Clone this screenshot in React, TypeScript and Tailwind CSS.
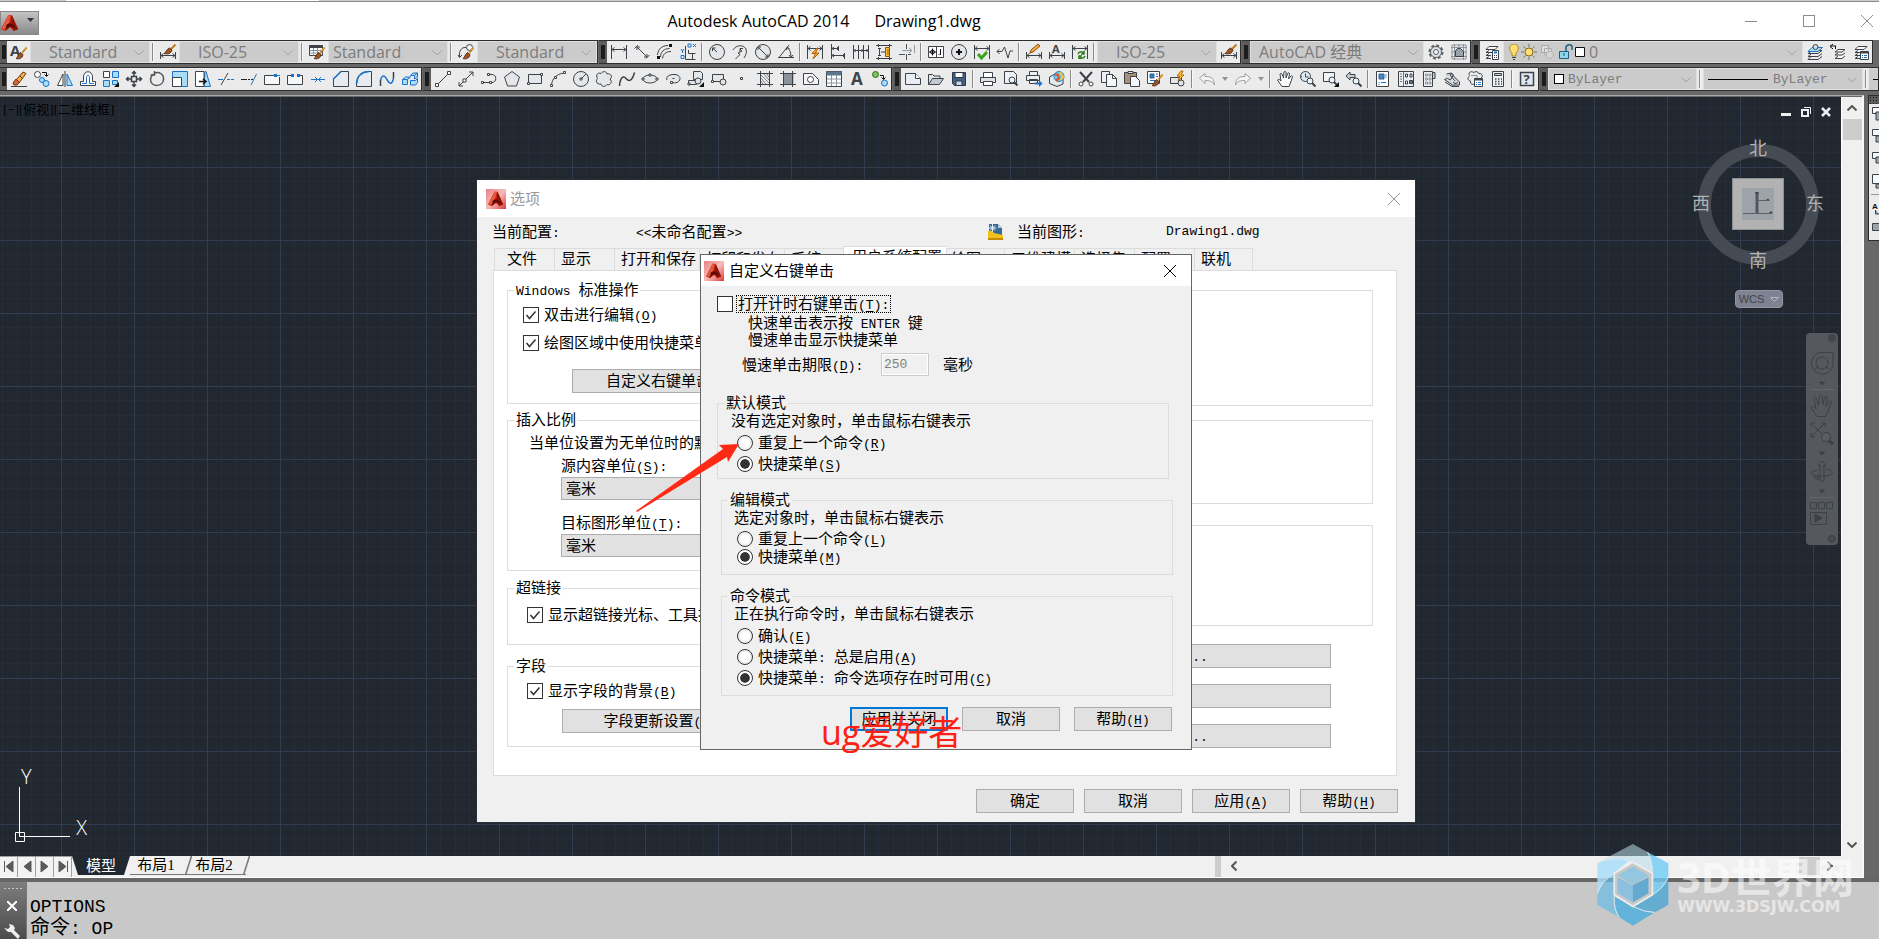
import { useId, type ReactNode } from "react";
import { clsx } from "clsx";

const INK = "#3d4248";
const BLUE = "#1a73c8";
const SKY = "#a9dcf5";
const PAPER = "#f7f9fc";

type PathProps = { d: string; c?: string; f?: string; w?: number };

function P({ d, c = INK, f = "none", w = 1 }: PathProps) {
  return <path d={d} stroke={c} fill={f} strokeWidth={w} />;
}

function Brush() {
  return (
    <>
      <P d="M15.500 3.500L11.500 8.500" c="#c77a1c" w={2} />
      <P d="M15.500 3L13.500 5.500" c="#f2b544" />
      <P d="M5 14.500C7 14 6.500 10.500 9.500 8.500L12 10.500C11.500 14.500 8 15.500 5 14.500Z" c="#5f3212" f="#9a5626" />
    </>
  );
}

function Lens({ x = 10, y = 10 }: { x?: number; y?: number }) {
  return (
    <>
      <circle cx={x} cy={y} r="3" fill="#e8f3fa" stroke={INK} />
      <path d={`M${x + 2} ${y + 2}l3.500 3.500`} stroke={INK} strokeWidth="2" />
    </>
  );
}

const dimBar = <P d="M.5 8v7M15.500 8v7M1 11.500h14M3.500 9.500l-2.500 2 2.500 2M12.500 9.500l2.500 2-2.500 2" />;
const dimTop = <P d="M.5 1v14M15.500 1v14M1 4.500h14M3.500 2.500L1 4.500l2.500 2M12.500 2.500L15 4.500l-2.500 2" />;
const sheets = <P d="M5 2.500h9l-3 3H2zM5 6.500L2 8.500h9l1-1M5 9.500l-3 2h5M5 12.500l-3 2h5" f={PAPER} />;
const bigCircle = <circle cx="8" cy="8" r="7.500" fill="#e4e7ea" stroke={INK} />;
const bolt = <P d="M11 0L7 5h3L8 10l6-6h-3l2-4z" c="#b56a00" f="#ffc532" />;

const icons: Record<string, ReactNode> = {
  textStyle: (
    <>
      <text x="-1" y="12" fontSize="15" fontWeight="700" fontFamily="Open Sans, sans-serif" fill={INK}>A</text>
      <Brush />
    </>
  ),
  dimStyle: (
    <>
      {dimBar}
      <P d="M15.500 .5L11 5" c="#c77a1c" w={2} />
      <P d="M4 9.500C6 9 6 5.500 9.500 4L12 6C11 9.500 8 10.500 4 9.500Z" c="#5f3212" f="#9a5626" />
    </>
  ),
  tableStyle: (
    <>
      <P d="M.5 1.500h13v10H.5z" f="#fff" />
      <P d="M.5 2.500h13" w={3} />
      <P d="M4.500 4v7.500M8.500 4v7.500M.5 6.500h13M.5 9h13" c="#8d949b" />
      <Brush />
    </>
  ),
  leaderStyle: (
    <>
      <P d="M1.500 13V8.500C3 4 5 3.500 8 3.500M0 11l1.500 2.500L4 11" />
      <circle cx="11.500" cy="3.500" r="3" stroke={INK} fill={PAPER} />
      <Brush />
    </>
  ),
  dimLinear: <P d="M.5 1v14M15.500 1v14M1 5.500h14M3.500 3.500l-2.500 2 2.500 2M12.500 3.500l2.500 2-2.500 2" />,
  dimAligned: <P d="M4 1L.5 4.500M15.500 11L12 14.500M3 3l10 10M3 6V3h3M13 10v3h-3" />,
  dimArc: (
    <>
      <P d="M3.500 13C3.500 8 7 4.500 12.500 4.500M5.500 14.500C6 10 9 7.500 14 7.500M.5 11C1 5 5 1.500 11 1.500" />
      <P d="M0 12h3v3H0zM12 0h3v3h-3z" c="#111" f="#111" w={0} />
    </>
  ),
  dimOrdinate: (
    <>
      <P d="M5.500 2v13.500h10M8.500 6v3.500h7M12.500 10v5" />
      <P d="M1 5l1.500 2L4 5M2.500 7v2M1 11.500h3v3H1zM8 0h3v3H8zM13 0l3 3M16 0l-3 3" c={BLUE} />
    </>
  ),
  dimRadius: <>{bigCircle}<P d="M8 8L3.500 4M3.500 7V4h3" /></>,
  dimJogged: <P d="M1 6C4 1 11 0 14 5c1 3 0 6-2 9M3.500 15L8 10.500 6 9l4-2-2-2M8 8V4.500h3" />,
  dimDiameter: <>{bigCircle}<P d="M3 3l10 10M3 6V3h3M13 10v3h-3" /></>,
  dimAngular: <P d="M0 13.500h16M1 13.500L11 1M9 3.500c3 2 4 5 4 10M11.500 4.500L9 3.500 8.500 6M11 11l2 2.500 2-2.500" />,
  quickDim: <>{dimTop}<P d="M10 4L5 9.500h3.500L6 15l6-6H8.500L11 4z" c="#b35a00" f="#ffb42a" /></>,
  dimBaseline: <P d="M1.500 0v15M8.500 2v5M14.500 9v6M2 4.500h6M2 11.500h12M4 3L2 4.500 4 6M7 3l1.500 1.500L7 6M4 10l-2 1.500L4 13M13 10l1.500 1.500L13 13" />,
  dimContinue: <P d="M.5 1v14M5.500 1v14M10.500 1v14M15.500 1v14M1 6.500h14M2 5v3M9 5v3M14 5v3" />,
  dimSpace: <><P d="M0 1.500h16M0 14.500h16M2.500 0v3M13.500 0v3M2.500 13v3M13.500 13v3M3.500 4v8M2 4.500h3M2 11.500h3M5 8h4" /><P d="M9.500 3.500h4v9h-4zM11 6h2M11 8h2M11 10h2" c="#8a5a00" f="#ffc038" /></>,
  dimBreak: <><P d="M7.500 0v5M7.500 10v6M0 10.500h6M9 10.500h3" c="#4d5258" /><P d="M3 6.500h9M15.500 1v8M10 4l3 2.500L10 9" c="#9299a0" /></>,
  tolerance: <><P d="M.5 2.500h15v11H.5zM8.500 2.500v11" f="#fff" /><circle cx="4.500" cy="8" r="2" stroke="#111" fill="none" /><P d="M4.500 4.500v7M1 8h7M12.500 5v6M10.500 10.500h1" c="#111" /></>,
  centerMark: <>{bigCircle}<P d="M8 5v6M5 8h6" c="#111" w={2} /></>,
  inspect: <>{dimTop}<P d="M4 10l3.500 4L13 8" c="#35a51d" w={3} /></>,
  jogLine: <P d="M0 7.500h5M2.500 5L0 7.500 2.500 10M5 7.500L7.500 3l3.500 11 2-7h3" />,
  dimEdit: <>{dimBar}<P d="M4 9l1-3 7-6 2 2-7 6z" c="#8a4a12" f="#f6ac3c" /></>,
  dimTextEdit: <>{dimBar}<text x="3" y="9" fontSize="11" fontWeight="700" fontFamily="Open Sans, sans-serif" fill={INK}>A</text></>,
  dimUpdate: <>{dimTop}<P d="M6 10c1-3 5-3 6 0M12 7v3H9M13 12c-1 3-5 3-6 0M7 15v-3h3" c="#2f7d1e" w={1.500} /></>,
  gear: <><circle cx="8" cy="8" r="6.500" strokeDasharray="3 2" strokeWidth="2" stroke="#5a6067" fill="none" /><circle cx="8" cy="8" r="5.500" fill="#dfe3e7" stroke="#5a6067" /><circle cx="8" cy="8" r="2.500" fill="#f2f4f5" stroke="#5a6067" /></>,
  workspace: <><P d="M3.500 0v16M12.500 0v16M0 3.500h16M0 12.500h16M8 0v4M0 8h3M13 8h3M1 1h14v14H1z" c="#8d949b" /><P d="M4.500 7l2-2.500h3l3 3v5h-8z" f="#9aa2aa" /></>,
  layerProps: <>{sheets}<P d="M8.500 6.500h6v9h-6z" f="#fff" /><P d="M10 8.500h3" c={BLUE} w={2} /><P d="M10 11.500h1M12 11.500h1M10 13.500h1M12 13.500h1" /></>,
  layerCurrent: <><P d="M5 6.500h10l-4 3H1zM4 10L1 12.500h10l4-3M4 12.500L1 15.500h10l4-3" /><P d="M5 3.500h10.500L11 7.500H1z" c={BLUE} f={SKY} /><circle cx="8.500" cy="3" r="2.500" stroke={INK} fill="#d7dce0" /></>,
  layerPrev: <><P d="M8 5.500h7l-3 2.500H5zM8 9l-3 2h7l3-2M8 12l-3 2.500h7l3-2.500" f={PAPER} /><P d="M0 2h6M3 0L0 2.500 3 5M5.500 2v3" c="#111" /></>,
  layerStates: <>{sheets}<P d="M7.500 7.500h8v8h-8z" f="#fff" /><P d="M7.500 8.500h8" w={2} /><P d="M9 11.500h1M11 11.500h3M9 13.500h1M11 13.500h3" c={BLUE} /></>,

  erase: <><P d="M0 15.500h16" /><P d="M5 9l7-8 3 1.500L8 12z" c="#6b3a10" f="#f3b04b" /><P d="M9 5l3 3" c="#6b3a10" /><P d="M2 12l3-4 3.500 3.500L6 14H3z" c="#7d2a12" f="#d06a3a" /></>,
  copy: <><circle cx="3.500" cy="3.500" r="3" stroke={INK} fill="#fff" /><circle cx="8" cy="9" r="2.500" stroke={BLUE} fill={SKY} /><circle cx="12" cy="12.500" r="3" stroke={BLUE} fill={SKY} /><P d="M8 1.500h4.500V5M10.500 3.500l2 2 2-2" c="#111" /></>,
  mirror: <><P d="M.5 14.500L6 3v11.500z" f="#fff" /><P d="M8 0v16" /><P d="M15.500 14.500L10 3v11.500z" c={BLUE} f={SKY} /></>,
  offset: <><P d="M.5 14.500h15v-4h-3V6c0-7-9-7-9 0v4.500h-3z" f="#fff" /><P d="M2 12.500h4.500V6.500c0-3 3-3 3 0v6H14" c={BLUE} /></>,
  array: <><P d="M.5 .5h6v6h-6z" f="#fff" /><P d="M9.500 .5h6v6h-6zM.5 9.500h6v6h-6zM9.500 9.500h5v4h-5z" c={BLUE} f={SKY} /><P d="M16 11v5h-5z" c="#111" f="#111" w={0} /></>,
  move: <P d="M5.500 5.500h5v5h-5zM8 0v5M8 11v5M0 8h5M11 8h5M6 2.500L8 .5l2 2M6 13.500l2 2 2-2M2.500 6l-2 2 2 2M13.500 6l2 2-2 2" w={1.500} />,
  rotate: <P d="M5 2.500C10-.5 15 3.500 14.500 8.500 14 16 2.500 16.500 1.500 9 1.500 6.500 2.500 4.500 4.500 3M5.500 0v4h-4" c="#50565c" w={1.500} />,
  scale: <><P d="M.5 .5h15v15H.5z" c={BLUE} f={SKY} /><P d="M.5 6.500h9v9h-9z" f="#fff" /></>,
  stretch: <><P d="M10 .5h1l4.500 15H9z" c={BLUE} f={SKY} /><P d="M.5 .5h8.500v15H.5z" f="#fff" /><P d="M4 10.500h6M8 8l3 2.500L8 13" c="#111" w={1.500} /></>,
  trim: <><P d="M0 8.500h5" c={BLUE} /><P d="M9 8.500h3M13 8.500h3" c={BLUE} /><P d="M3 14L10 2" /></>,
  extend: <><P d="M0 8.500h6M7 8.500h2M10 8.500h2" c="#222" /><P d="M10 14L15.500 3" c={BLUE} /></>,
  breakPoint: <><P d="M10 4.500H.5v9h15V6" f="#f7f8fa" /><P d="M10 3h3v3h-3z" c={BLUE} f={BLUE} w={0} /><P d="M13 4.500h3" c={BLUE} /></>,
  break: <><P d="M4 4.500H.5v9h15v-9H12" f="#f7f8fa" /><P d="M4 3h3v3H4zM10 3h3v3h-3z" c={BLUE} f={BLUE} w={0} /></>,
  join: <P d="M1 8.500h14M5 6l2.500 2.500L5 11M11 6L8.500 8.500 11 11" c={BLUE} />,
  chamfer: <><P d="M.5 15.500V8L8 .5h7.500v15z" f="#e7ecf3" /><P d="M0 8.500L8.500 0" c={BLUE} w={1.500} /></>,
  fillet: <><P d="M.5 15.500V12C1 5 5 1 12 .5h3.500v15z" f="#e7ecf3" /><P d="M.5 13C1 5 5 1 13 .5" c={BLUE} w={1.500} /></>,
  blend: <><P d="M1.500 15V9M14.500 1v6" w={1.500} /><P d="M1.500 9C4 1 7 7 8.500 9.500S13 15 14.500 7" c={BLUE} w={1.500} /></>,
  explode: <P d="M.5 8.500h5v5h-5zM5.500 8.500l3-2.500h-5l-3 2.500M8.500 4.500h4l3-2.500h-4.500zM8.500 9.500h5l2-2v4l-2 2.500h-5zM12.500 4.500v3.500l3-2V2" c={BLUE} f={SKY} />,

  line: <><P d="M2 14L14 2" /><P d="M.5 12.500h3v3h-3zM12.500 .5h3v3h-3z" f="#fff" /></>,
  xline: <><P d="M1 15L15 1M11 1h4v4M1 11v4h4" /><P d="M5 8h3v3H5z" f="#fff" /></>,
  polyline: <><P d="M2 11.500h9c5 0 5-8 0-8H9" /><P d="M.5 10.500h2v2h-2zM8.500 10.500h2v2h-2zM6.500 2.500h2v2h-2z" f="#fff" /></>,
  polygon: <P d="M8 .5L15.500 6 12.500 15h-9L.5 6z" f="#e4e7ea" />,
  rectangle: <><P d="M1.500 3.500h13v9h-13z" f="#e4e7ea" /><P d="M.5 11.500h2v2h-2zM13.500 2.500h2v2h-2z" f="#fff" /></>,
  arc: <><P d="M1.500 14C2 8 6 3 14 2" /><P d="M.5 13.500h2v2h-2zM4.500 5.500h2v2h-2zM13.500 .5h2v2h-2z" f="#fff" /></>,
  circle: <>{bigCircle}<P d="M8 8l5-5M7 7h2v2H7z" /></>,
  cloud: <P d="M5 2.500c2-3 6-2 6 .5 4-1 6 3 3 5 3 3 0 7-3 5.500-2 3-6 2-6-.5-5 1-5.500-4-3.500-5.500C-.5 4 1.500 1 5 2.500z" f="#e4e7ea" />,
  spline: <P d="M.5 15C1 7 4 4 7 7.500s6 3 8.500-6" w={1.500} />,
  ellipse: <><ellipse cx="8" cy="8" rx="7" ry="4" stroke={INK} fill="#e4e7ea" /><P d="M0 7h2v2H0zM14 7h2v2h-2zM7 3h2v2H7z" f="#fff" /></>,
  ellipseArc: <><P d="M2 9C-1 3 15 1 15 7.500c0 4-5 5-8 4M7.500 7.500h2" f="#e4e7ea" /><P d="M5.500 10.500h2v2h-2z" f="#fff" /></>,
  insert: <><P d="M5.500 .5h7l2 2v6h-9zM.5 9.500h8v4h-8z" f="#e4e7ea" /><circle cx="10" cy="10" r="3" stroke={INK} fill="#dfe3e7" /><P d="M0 12h2v2H0z" f="#fff" /><P d="M16 11v5h-5z" c="#111" f="#111" w={0} /></>,
  makeBlock: <><P d="M1.500 3.500h11v7h-11z" f="#e4e7ea" /><circle cx="12" cy="11" r="3" stroke={INK} fill="#dfe3e7" /><P d="M.5 9.500h2v2h-2z" f="#fff" /></>,
  point: <P d="M6.500 6.500h2v2h-2z" f="#fff" />,
  hatch: <><P d="M3.500 0v16M12.500 0v16M0 2.500h16M0 13.500h16" /><P d="M4 4l8 8M4 7l5 6M7 3l5 6M4 10l2 3M10 3l2 3" c="#7d848b" /></>,
  gradient: <><P d="M4 3h9v10H4z" c="#8b9299" f="#8b9299" /><P d="M3.500 0v16M12.500 0v16M0 2.500h16M0 13.500h16" /></>,
  region: <><P d="M.5 2.500h9l6 6v5H.5z" f="#f2f4f6" /><circle cx="7.500" cy="8.500" r="3" stroke={INK} fill="#fff" /></>,
  table: <><P d="M.5 .5h15v15H.5z" f="#fff" /><P d="M.5 2.500h15" c="#5d7690" w={4} /><P d="M5.500 4v11M10.500 4v11M1 8h14M1 12h14" c="#8d949b" /></>,
  mtext: <text x="2" y="14" fontSize="17" fontWeight="700" fontFamily="Open Sans, sans-serif" fill={INK}>A</text>,
  addSelected: <><circle cx="3.500" cy="3.500" r="3" stroke="#2c6b1b" fill="#7fc35e" /><circle cx="12.500" cy="12" r="3" stroke={BLUE} fill={SKY} /><P d="M8 4.500h3.500V8M9.500 6.500l2 2 2-2" c="#111" /></>,

  new: <><P d="M.5 2.500h10l5 5v6H.5z" f="#e9edf4" /><P d="M10.500 2.500v5h5" f="#fff" /></>,
  open: <><P d="M.5 13.500V3.500h4l1.500 1.500h6v3" f="#dfe3ea" /><P d="M.5 13.500l4-6h11l-4 6z" f="#c3c9d2" /></>,
  save: <><P d="M1.500 1.500h13v13h-11l-2-2z" c="#29394d" f="#46607e" /><P d="M4 1.500h8v5H4z" c="#29394d" f="#fff" /><P d="M5 10h6v4.500H5z" c="#29394d" f="#cfd8e2" /></>,
  print: <><P d="M3.500 6V1.500h9V6M3.500 10.500v4h9v-4" f="#fff" /><P d="M.5 6.500h15v5H.5z" f="#dfe3e7" /><P d="M3.500 10.500h9v4h-9z" f="#fff" /></>,
  preview: <><P d="M1.500 .5h9l3 3v9h-12z" f="#eef1f5" /><Lens x={9} y={9} /></>,
  publish: <><P d="M3.500 4V.5h8V4M.5 4.500h13v5H.5zM3.500 8.500h8v4h-8z" f="#eceff2" /><P d="M9 11.500h4V9l3.500 3.500L13 16v-2.500H9z" c={BLUE} f={BLUE} w={0} /></>,
  dwf: <><P d="M.5 6L6 3l8 3v7l-6 2.500-7.500-3z" f="#e4e9ee" /><circle cx="10" cy="5.500" r="5" stroke="#2a84b8" fill="#69c8e8" /><P d="M6 3l3 1 1 3-3 3" c="#e04b2a" w={2} /><P d="M11 1l3 5-2 3" c="#ffc532" w={2} /></>,
  cut: <><P d="M2 1l9 10M14 1L5 11" w={2} /><circle cx="3" cy="13" r="2" stroke={INK} fill="#fff" /><circle cx="13" cy="13" r="2" stroke={INK} fill="#fff" /></>,
  copyClip: <><P d="M.5 .5h8v11h-8z" f="#eceff4" /><P d="M5.500 3.500h6l4 4v8h-10z" f="#f5f7fa" /><P d="M11.500 3.500v4h4" /></>,
  paste: <><P d="M.5 1.500h12v11H.5z" f="#a59377" /><P d="M4 .5h5v2H4z" f="#e8e8e8" /><P d="M6.500 5.500h5l4 4v6h-9z" f="#f5f7fa" /></>,
  matchProp: <><P d="M.5 .5h12v12H.5z" f="#fff" /><P d="M3 3h4v4H3z" c="#2c5f94" f="#3f7db8" /><P d="M9 3h2M9 5.500h2M3 9.500h5" c={BLUE} /><Brush /></>,
  blockEdit: <><P d="M.5 6.500h11v6H.5z" f="#e4e7ea" /><circle cx="11" cy="12" r="3" stroke={INK} fill="#dfe3e7" />{bolt}</>,
  undo: <P d="M.5 7L6 2.500v3c6 0 9 1.500 9.500 8.500-2-4-5-4.500-9.500-4.500v3z" c="#9b9fa3" f="#f5f5f5" />,
  redo: <P d="M15.500 7L10 2.500v3c-6 0-9 1.500-9.500 8.500 2-4 5-4.500 9.500-4.500v3z" c="#9b9fa3" f="#f5f5f5" />,
  pan: <P d="M5 15.500L.5 9c1-1.500 2-.5 3.500 1L3 3c1-1 1.500-.5 2 0l1.500 4L7 1c1-1 1.500-.5 2 0v6l2-5c1-.5 1.500 0 1.500 1L11.500 8 14 5c1-.5 1.500 0 1.500 1L13 13l-1 2.500z" f="#fff" />,
  zoomRealtime: <><circle cx="5.500" cy="5.500" r="5" stroke={INK} fill="#dfe8ef" /><P d="M5.500 2.500v3.500h3M1 5.500h1" /><Lens /></>,
  zoomWindow: <><P d="M.5 1.500h11v9H.5z" f="#f2f4f6" /><Lens x={9} y={9} /><P d="M16 11v5h-5z" c="#111" f="#111" w={0} /></>,
  zoomPrevious: <><P d="M0 5l4-4v2.500h5v3H4V9z" f="#c9ced4" /><Lens /></>,
  properties: <><P d="M1.500 .5h12v15h-12z" f="#fff" /><P d="M4 3h5v5H4z" c="#2c5f94" f="#4a86bd" /><P d="M11 3v4" c="#8d949b" /><P d="M3.500 11.500h1M6 11.500h5M3.500 13.500h1" c={BLUE} /></>,
  designCenter: <><P d="M.5 .5h15v15H.5z" f="#eef1f4" /><P d="M5.500 1v14M2 3h2M2 5.500h2M2 8h2M2 10.500h2" c="#6b7279" /><P d="M7.500 3h2v3h-2zM12 3h2v3h-2zM7.500 10h2v3h-2z" /><P d="M11.500 9.500h3v3h-3z" f="#6b7279" /></>,
  toolPalettes: <><P d="M2.500 .5h9v15h-9z" f="#eef1f4" /><P d="M11.500 1.500h2.500v6h-2.500z" f="#c9ced4" /><P d="M4.500 3h2v2h-2zM8 3h2v2H8zM4.500 7h2v2h-2zM8 7h2v2H8zM4.500 11h2v2h-2zM8 11h2v2H8z" c="#8d949b" /></>,
  sheetSet: <P d="M.5 8.500l3-1 3 1.500 3-5-2-2-5 1M.5 8.500l8 5.500h7v-3L7 2.500l-1 1.500 5 6M1 11l7 4.500h7M9 11l2 1.500 3-1" f="#d5dae0" />,
  markup: <><P d="M2.500 4.500c-2-3 2-5 4-3 2-1.500 5-1 5 1 4-1 5 4 2 5M2.500 5c-3 2-1 5 1 5-.5 3 2 4 4 3" /><P d="M4 4.500h6v5" c="#8d949b" /><P d="M7.500 7.500h8v8h-8z" f="#fff" /><P d="M7.500 8.500h8" w={2} /><P d="M9 11.500h1M11 11.500h3M9 13.500h1M11 13.500h3" c={BLUE} /></>,
  calculator: <><P d="M2.500 .5h11v15h-11z" f="#f0f2f4" /><P d="M4.500 2.500h7v2h-7z" f="#c5ccd3" /><P d="M5 8h1.500M8 8h1.500M11 8h1M5 10.500h1.500M8 10.500h1.500M11 10.500h1M5 13h1.500M8 13h1.500M11 13h1" w={1.500} /></>,
  help: <><P d="M1.500 1.500h13v13h-13z" f="#dfe6ee" w={1.500} /><text x="4.500" y="13" fontSize="13" fontWeight="700" fontFamily="Open Sans, sans-serif" fill={INK}>?</text></>,
};

function Icon({ name }: { name: string }) {
  return (
    <svg aria-hidden="true" viewBox="0 0 16 16" className="size-4 overflow-visible">
      {icons[name]}
    </svg>
  );
}

function ToolButton({ name }: { name: string }) {
  return (
    <button type="button" aria-label={name} className="grid w-[23px] shrink-0 place-items-center">
      <Icon name={name} />
    </button>
  );
}

/* "|" is a divider, "v" the small history arrow after undo / redo */
function Tools({ items }: { items: string }) {
  return items.split(" ").map((item, i) => {
    if (item === "|") return <Divider key={i} />;
    if (item === "v") {
      return (
        <button key={i} type="button" aria-label="history" className="grid w-[13px] shrink-0 place-items-center">
          <svg viewBox="0 0 6 4" className="h-1 w-1.5"><path d="M0 0h6L3 4z" fill="#8f9397" /></svg>
        </button>
      );
    }
    return <ToolButton key={i} name={item} />;
  });
}

function Divider() {
  return <span className="mx-0.5 my-0.5 w-0.5 shrink-0 border-l border-[#8a8a8a] bg-[#f8f8f8]" />;
}

function Toolbar({ children, first, className }: { children: ReactNode; first?: boolean; className?: string }) {
  return (
    <div className={clsx("flex h-6 border-y border-r border-[#2d2d2d] bg-[#ebebeb]", className ?? "shrink-0")}>
      <span className={clsx("grid shrink-0 place-items-center bg-[#5c5c5c]", first ? "w-[7px]" : "w-2")}>
        <span className="h-3.5 w-1 bg-[radial-gradient(#1c1c1c_1px,transparent_1px)] bg-[length:2px_2px]" />
      </span>
      {children}
    </div>
  );
}

function Chevron({ className }: { className?: string }) {
  return (
    <svg aria-hidden="true" viewBox="0 0 10 6" className={clsx("pointer-events-none h-1.5 w-2.5", className)}>
      <path d="M.5 .5L5 5 9.500 .5" fill="none" stroke="currentColor" />
    </svg>
  );
}

type ComboProps = { label: string; value: string; className: string; pad: string; mono?: boolean; children?: ReactNode };

function Combo({ label, value, className, pad, mono, children }: ComboProps) {
  return (
    <div className={clsx("relative flex border border-[#e0e0e0] bg-[#cbcbcb]", className)}>
      <select
        aria-label={label}
        className={clsx(
          "w-full appearance-none bg-transparent text-[#7c7c7c] outline-none",
          pad,
          mono ? "pt-0.5 font-['Liberation_Mono',monospace] text-[13px]" : "font-['Open_Sans','Noto_Sans_CJK_SC',sans-serif] text-base leading-5",
        )}
      >
        <option>{value}</option>
      </select>
      {children}
      <Chevron className="absolute right-[5px] top-2 text-[#a3a3a3]" />
    </div>
  );
}

function AcadLogo({ className }: { className?: string }) {
  return (
    <svg aria-hidden="true" viewBox="0 0 20 20" className={className}>
      <path d="M8 1h4l7 16-5 2-4-4-5 4-5-2z" fill="#c6260f" />
      <path d="M8 1h3L9 9l-4 8-4.500 0z" fill="#e8583c" />
      <path d="M12 1l7 16-5 1.500-3-9z" fill="#8e1407" />
      <path d="M6 12l4-2 5 3 1 3-6-2-5 4z" fill="#5c0b04" />
    </svg>
  );
}

function DialogIcon() {
  return (
    <span className="grid size-5 place-items-center bg-linear-to-br from-[#e98080] via-[#f3bcbc] to-[#d8303a]">
      <AcadLogo className="size-4" />
    </span>
  );
}

function CloseX({ className }: { className?: string }) {
  return (
    <svg aria-hidden="true" viewBox="0 0 12 12" className={clsx("size-3", className)}>
      <path d="M0 0l12 12M12 0L0 12" stroke="currentColor" />
    </svg>
  );
}

/* half-width latin run inside a dialog label */
function Latin({ children }: { children: ReactNode }) {
  return <span className="whitespace-pre font-['Liberation_Mono',monospace] text-[13px] leading-none">{children}</span>;
}

function Key({ k, tail = "" }: { k: string; tail?: string }) {
  return <Latin>(<span className="underline underline-offset-2">{k}</span>){tail}</Latin>;
}

function Check({ children, checked, focused }: { children: ReactNode; checked?: boolean; focused?: boolean }) {
  const id = useId();
  return (
    <div className="flex h-4 items-center gap-[5px]">
      <span className="relative size-4 shrink-0">
        <input
          id={id}
          type="checkbox"
          defaultChecked={checked}
          className="peer block size-4 appearance-none border border-[#333] bg-white"
        />
        <svg viewBox="0 0 16 16" className="pointer-events-none absolute inset-0 hidden size-4 peer-checked:block">
          <path d="M3.500 8l3 3.500 6-7" fill="none" stroke="#333" strokeWidth="1.500" />
        </svg>
      </span>
      <label htmlFor={id} className={clsx("whitespace-nowrap leading-4", focused && "-ml-0.5 border border-dotted border-black px-px")}>
        {children}
      </label>
    </div>
  );
}

function Radio({ name, children, checked }: { name: string; children: ReactNode; checked?: boolean }) {
  const id = useId();
  return (
    <div className="flex h-[18px] items-center gap-[5px]">
      <input
        id={id}
        type="radio"
        name={name}
        defaultChecked={checked}
        className="size-4 appearance-none rounded-full border border-[#333] bg-white bg-clip-content p-[2px] checked:bg-[#333] checked:shadow-[inset_0_0_0_2px_#fff]"
      />
      <label htmlFor={id} className="whitespace-nowrap">{children}</label>
    </div>
  );
}

function Group({ title, className, body, children }: { title: ReactNode; className?: string; body?: string; children?: ReactNode }) {
  return (
    <fieldset className={clsx("min-w-0 border border-[#dcdcdc]", className)}>
      <legend className="ml-1.5 h-[18px] px-0.5 leading-[18px]">{title}</legend>
      <div className={body}>{children}</div>
    </fieldset>
  );
}

function PushButton({ children, className, focused }: { children: ReactNode; className: string; focused?: boolean }) {
  return (
    <button
      type="button"
      className={clsx(
        "h-6 shrink-0 whitespace-nowrap bg-[#e1e1e1] leading-5",
        focused ? "border-2 border-[#0078d7]" : "border border-[#adadad]",
        className,
      )}
    >
      {children}
    </button>
  );
}

function UnitSelect({ id }: { id: string }) {
  return (
    <select id={id} className="block h-[23px] w-[280px] appearance-none border border-[#adadad] bg-[#e1e1e1] px-1 leading-5">
      <option>毫米</option>
    </select>
  );
}

const tabs = [
  { label: "文件", width: "w-[60px] pl-3" },
  { label: "显示", width: "w-[60px] pl-1.5" },
  { label: "打开和保存", width: "w-[85px] pl-1.5" },
  { label: "打印和发布", width: "w-[85px] pl-1.5" },
  { label: "系统", width: "w-[59px] pl-1.5" },
  { label: "用户系统配置", width: "w-[103px] pl-2", active: true },
  { label: "绘图", width: "w-[58px] pl-1" },
  { label: "三维建模", width: "w-[70px] pl-1.5" },
  { label: "选择集", width: "w-[60px] pl-1.5" },
  { label: "配置", width: "w-[60px] pl-1.5" },
  { label: "联机", width: "w-[59px] pl-1.5" },
];

function OptionsDialog() {
  return (
    <section className="absolute left-[477px] top-[83px] flex w-[938px] flex-col bg-[#f0f0f0] pb-[9px] shadow-[0_0_0_1px_#2a2f36]">
      <header className="flex h-[37px] items-center gap-1 bg-white pl-[9px] pr-[15px] text-[#999]">
        <DialogIcon />
        <h2 className="mr-auto">选项</h2>
        <button type="button" aria-label="关闭"><CloseX /></button>
      </header>

      <div className="flex h-[29px] items-center pl-[15px] pr-4">
        <span className="w-36">当前配置<Latin>:</Latin></span>
        <span className="w-[352px]"><Latin>&lt;&lt;</Latin>未命名配置<Latin>&gt;&gt;</Latin></span>
        <svg aria-hidden="true" viewBox="0 0 16 16" className="size-4">
          <path d="M1 0h9l4 4v8H1z" fill="#356a96" />
          <path d="M10 0l4 4h-4z" fill="#b9cde0" />
          <path d="M4.500 0v8M.5 4h8M2 1.500l5 5M7 1.500l-5 5" stroke="#e6f4ff" />
          <path d="M0 7h4l2 2 9 2v5H0z" fill="#f2c21c" />
          <path d="M0 15h15" stroke="#c78b00" strokeWidth="2" />
        </svg>
        <span className="ml-[13px] w-[149px]">当前图形<Latin>:</Latin></span>
        <Latin>Drawing1.dwg</Latin>
      </div>

      <div role="tablist" className="ml-[17px] flex h-6 items-end">
        {tabs.map((tab) => (
          <button
            key={tab.label}
            type="button"
            role="tab"
            aria-selected={Boolean(tab.active)}
            className={clsx(
              "shrink-0 whitespace-nowrap border-l border-t border-[#dcdcdc] text-left leading-4 last:border-r",
              tab.width,
              tab.active ? "h-6 bg-white pb-1" : "h-[22px] pb-0.5",
            )}
          >
            {tab.label}
          </button>
        ))}
      </div>

      <div className="ml-4 mr-[18px] grid grid-cols-2 gap-x-4 border border-[#dcdcdc] bg-white pb-[27px] pl-[13px] pr-[23px] pt-2.5">
        <div>
          <Group title={<><Latin>Windows </Latin>标准操作</>} body="pb-2.5 pl-[15px]">
            <div className="pt-2"><Check checked>双击进行编辑<Key k="O" /></Check></div>
            <div className="mt-3"><Check checked>绘图区域中使用快捷菜单<Key k="M" /></Check></div>
            <PushButton className="ml-[49px] mt-[18px] block w-[220px]">自定义右键单击<Key k="I" tail="..." /></PushButton>
          </Group>
          <Group title="插入比例" className="mt-[7px]" body="pb-[13px] pl-[21px]">
            <p className="pt-[5px]">当单位设置为无单位时的默认设置:</p>
            <div className="ml-8 mt-[5px]">
              <label htmlFor="source-unit" className="block h-5">源内容单位<Key k="S" tail=":" /></label>
              <UnitSelect id="source-unit" />
            </div>
            <div className="ml-8 mt-3.5">
              <label htmlFor="target-unit" className="block h-5">目标图形单位<Key k="T" tail=":" /></label>
              <UnitSelect id="target-unit" />
            </div>
          </Group>
          <Group title="超链接" className="mt-2" body="pb-[21px] pl-[19px] pt-2.5">
            <Check checked>显示超链接光标、工具提示和快捷菜单<Key k="H" /></Check>
          </Group>
          <Group title="字段" className="mt-3" body="pb-[13px] pl-[19px] pt-2">
            <Check checked>显示字段的背景<Key k="B" /></Check>
            <PushButton className="ml-[35px] mt-2.5 block w-[220px]">字段更新设置<Key k="F" tail="..." /></PushButton>
          </Group>
        </div>

        <div>
          <Group title="坐标数据输入的优先级" className="h-[125px]" />
          <Group title="关联标注" className="mt-[5px] h-[93px]" />
          <Group title={<>放弃<Latin>/</Latin>重做</>} className="mt-3 h-[110px]" body="pl-[54px] pt-[17px]">
            <Check checked>合并图层特性更改<Key k="C" /></Check>
          </Group>
          <div className="mr-[42px] mt-[18px] flex flex-col gap-4">
            <PushButton className="w-full">块编辑器设置<Key k="N" tail="..." /></PushButton>
            <PushButton className="w-full">线宽设置<Key k="L" tail="..." /></PushButton>
            <PushButton className="w-full">默认比例列表<Key k="D" tail="..." /></PushButton>
          </div>
        </div>
      </div>

      <footer className="mr-[17px] mt-[13px] flex justify-end gap-2.5">
        <PushButton className="w-[98px]">确定</PushButton>
        <PushButton className="w-[98px]">取消</PushButton>
        <PushButton className="w-[98px]">应用<Key k="A" /></PushButton>
        <PushButton className="w-[98px]">帮助<Key k="H" /></PushButton>
      </footer>
    </section>
  );
}

function RightClickDialog() {
  return (
    <section className="absolute left-[700px] top-[157px] w-[492px] border border-[#666] bg-[#f0f0f0] pb-[18px]">
      <header className="flex h-[31px] items-center gap-[5px] bg-white pl-[3px] pr-[15px]">
        <DialogIcon />
        <h2 className="mr-auto">自定义右键单击</h2>
        <button type="button" aria-label="关闭"><CloseX /></button>
      </header>

      <div className="pl-4 pt-2.5"><Check focused>打开计时右键单击<Key k="T" tail=":" /></Check></div>
      <div className="pl-[47px] pt-[3px] leading-[17px]">
        <p>快速单击表示按<Latin> ENTER </Latin>键</p>
        <p>慢速单击显示快捷菜单</p>
      </div>
      <div className="mt-1 flex items-center pl-[41px]">
        <label htmlFor="duration" className="w-[139px]">慢速单击期限<Key k="D" tail=":" /></label>
        <input
          id="duration"
          defaultValue="250"
          className="mr-3.5 h-[23px] w-12 border border-[#ccc] bg-[#f0f0f0] px-0.5 font-['Liberation_Mono',monospace] text-[13px] text-[#808080] ring-1 ring-inset ring-white"
        />
        毫秒
      </div>

      <Group title="默认模式" className="ml-4 mr-[22px] mt-[18px]" body="pb-[5px] pl-[13px]">
        <p>没有选定对象时，单击鼠标右键表示</p>
        <div className="mt-1 flex flex-col gap-[3px] pl-1.5">
          <Radio name="default-mode">重复上一个命令<Key k="R" /></Radio>
          <Radio name="default-mode" checked>快捷菜单<Key k="S" /></Radio>
        </div>
      </Group>
      <Group title="编辑模式" className="ml-5 mr-[18px] mt-3" body="pb-2 pl-3">
        <p>选定对象时，单击鼠标右键表示</p>
        <div className="mt-[3px] flex flex-col pl-[3px]">
          <Radio name="edit-mode">重复上一个命令<Key k="L" /></Radio>
          <Radio name="edit-mode" checked>快捷菜单<Key k="M" /></Radio>
        </div>
      </Group>
      <Group title="命令模式" className="ml-5 mr-[18px] mt-3" body="pb-2 pl-3">
        <p>正在执行命令时，单击鼠标右键表示</p>
        <div className="mt-1 flex flex-col gap-[3px] pl-[3px]">
          <Radio name="command-mode">确认<Key k="E" /></Radio>
          <Radio name="command-mode">快捷菜单<Latin>: </Latin>总是启用<Key k="A" /></Radio>
          <Radio name="command-mode" checked>快捷菜单<Latin>: </Latin>命令选项存在时可用<Key k="C" /></Radio>
        </div>
      </Group>

      <footer className="mr-[19px] mt-[11px] flex justify-end gap-3.5">
        <PushButton focused className="w-[98px]">应用并关闭</PushButton>
        <PushButton className="w-[98px]">取消</PushButton>
        <PushButton className="w-[98px]">帮助<Key k="H" /></PushButton>
      </footer>
    </section>
  );
}

function ViewCube() {
  return (
    <div className="absolute right-[17px] top-[41px] grid size-[132px] place-items-center text-lg text-[#b0b3b6]">
      <span className="absolute size-[121px] rounded-full border-[13px] border-[#454a53]" />
      <span className="absolute -top-[3px]">北</span>
      <span className="absolute -bottom-[5px]">南</span>
      <span className="absolute left-0">西</span>
      <span className="absolute right-0">东</span>
      <span className="grid size-[52px] place-items-center border border-[#8f8f8f] bg-[#b2b2b2]">
        <svg aria-hidden="true" viewBox="0 0 32 32" className="size-8 bg-[#9ca4aa]">
          <path d="M15 4v21" stroke="#50565f" strokeWidth="3" />
          <path d="M1 25.500h29M16 12.500h11" stroke="#5b626b" />
          <path d="M13 4h3l1 2h-3zM24 12l2-1.500 2 2zM27 25l2-2 2 2z" fill="#3f454d" />
        </svg>
      </span>
    </div>
  );
}

function NavigationBar() {
  return (
    <svg aria-hidden="true" viewBox="0 0 32 212" className="absolute right-[3px] top-[236px] h-[212px] w-8 rounded bg-[#55595d]" fill="none" stroke="#3c4048">
      <circle cx="26" cy="5" r="3.500" fill="#484c51" />
      <path d="M24.500 3.500l3 3M27.500 3.500l-3 3" />
      <path d="M16 19.500h11v11c0 14-21 14-21.500 0 0-6 4-11 10.500-11z" />
      <circle cx="16" cy="30" r="6" />
      <path d="M9 36l3-2M23 36l-3-2" />
      <path d="M13.500 49h5l-2.500 3z" fill="#3c4048" />
      <path d="M4 56.500h24" stroke="#64686c" />
      <path d="M11 83.500l-6-9c1-2 3-1 5 1l-2-10c1-2 2-1 2.500 0l2 7 1-10c1-1 2-1 2.500 0l1 9 2-8c1-1 2 0 2 1l-1 9 3-5c2-1 3 0 2.500 1l-4 10-2 4z" />
      <path d="M5 90l14 14M19 90L5 104M5 94v-4h4M15 90h4v4M5 100v4h4" />
      <circle cx="20" cy="104" r="4.500" fill="#5a5e62" />
      <path d="M23 108l4 3" strokeWidth="3" />
      <path d="M13.500 119h5l-2.500 3z" fill="#3c4048" />
      <path d="M16 128l-4 4h2v16h4v-16h2z" />
      <path d="M12 137c-10 2-8 6 4 6s14-5 4-7M8 144l4-2v5z" />
      <path d="M13.500 157h5l-2.500 3z" fill="#3c4048" />
      <path d="M4 164.500h24" stroke="#64686c" />
      <path d="M4.500 169.500h6v6h-6zM12.500 169.500h6v6h-6zM20.500 169.500h6v6h-6zM4.500 179.500h16v12h-16z" />
      <path d="M9 181l7 4-7 4z" fill="#3c4048" />
      <circle cx="26" cy="206" r="3.500" fill="#484c51" />
    </svg>
  );
}

function UcsIcon() {
  return (
    <div className="absolute bottom-[14px] left-[15px] h-[68px] w-[72px] font-['Open_Sans',sans-serif] text-xl font-light leading-none text-white">
      <svg aria-hidden="true" viewBox="0 0 56 55" className="absolute bottom-0 left-0 h-[55px] w-14" fill="none" stroke="#fff">
        <path d="M4.500 0v49.500H55M.5 45.500h9v9h-9z" />
      </svg>
      <span className="absolute -top-[7px] left-1.5">Y</span>
      <span className="absolute bottom-1 right-0">X</span>
    </div>
  );
}

function Viewport() {
  return (
    <main className="relative flex-1 overflow-hidden bg-[#212830] bg-[linear-gradient(90deg,#343c50_1px,transparent_1px),linear-gradient(#343c50_1px,transparent_1px),linear-gradient(90deg,transparent_14px,#262d39_14px_15px,transparent_15px_29px,#262d39_29px_30px,transparent_30px_43px,#262d39_43px_44px,transparent_44px_58px,#262d39_58px_59px,transparent_59px),linear-gradient(transparent_14px,#262d39_14px_15px,transparent_15px_29px,#262d39_29px_30px,transparent_30px_43px,#262d39_43px_44px,transparent_44px_58px,#262d39_58px_59px,transparent_59px)] bg-[length:73px_73px] bg-[position:61px_70px]">
      <p className="absolute left-[3px] top-1 text-[13px] text-black">[−][俯视][二维线框]</p>
      <div className="absolute right-2.5 top-2.5 flex items-center gap-2.5 text-white">
        <button type="button" aria-label="最小化" className="h-[3px] w-2.5 translate-y-0.5 bg-[#eee]" />
        <button type="button" aria-label="还原">
          <svg viewBox="0 0 10 10" className="size-2.5" fill="none" stroke="#eee">
            <path d="M3 .5h6.500V7" />
            <path d="M1 3h6v6H1z" strokeWidth="2" />
          </svg>
        </button>
        <button type="button" aria-label="关闭">
          <svg viewBox="0 0 10 10" className="size-2.5"><path d="M1 1l8 8M9 1L1 9" stroke="#eee" strokeWidth="2.500" /></svg>
        </button>
      </div>
      <ViewCube />
      <button type="button" className="absolute right-[58px] top-[193px] flex h-[18px] w-12 items-center justify-center gap-1.5 rounded border border-[#9094a3] bg-[#7f8290] font-['Liberation_Sans',sans-serif] text-[11px] text-[#3f434c]">
        WCS
        <svg viewBox="0 0 9 5" className="h-[5px] w-[9px]"><path d="M.5 .5h8L4.500 4.500z" fill="none" stroke="#b5b8c4" /></svg>
      </button>
      <NavigationBar />
      <UcsIcon />
    </main>
  );
}

function LayoutBar() {
  return (
    <div className="flex h-[22px] shrink-0 border-b border-[#fff] bg-[#f0f0f0]">
      {["M4.500 3v11M13 3v11L6 8.500z", "M13 3v11L6 8.500z", "M5 3v11l7-5.500z", "M5 3v11l7-5.500zM13.500 3v11"].map((d) => (
        <button key={d} type="button" aria-label="切换布局" className="grid w-[18px] place-items-center border-r border-[#a0a0a0] bg-[#f3f3f3] shadow-[inset_0_1px_0_#a0a0a0]">
          <svg viewBox="0 0 18 17" className="h-[17px] w-[18px]"><path d={d} fill="#5a5a5a" stroke="#5a5a5a" /></svg>
        </button>
      ))}
      <button type="button" className="h-[19px] w-[58px] bg-[#212830] leading-[18px] text-white [clip-path:polygon(0_0,100%_0,52px_100%,6px_100%)]">模型</button>
      {["1", "2"].map((index) => (
        <button key={index} type="button" className="relative flex h-[19px] w-[58px] items-center justify-center border-b border-[#777] pr-1.5 leading-[18px]">
          布局{index}
          <svg viewBox="0 0 7 19" className="absolute -right-1 top-0 h-[19px] w-[7px]"><path d="M6.500 0L.5 19" stroke="#777" strokeWidth="1.500" /></svg>
        </button>
      ))}
      <div className="ml-auto flex w-[647px] items-center justify-between border-l-[6px] border-[#cdcdcd] pb-0.5 pl-2 pr-[27px]">
        <Chevron className="rotate-90 stroke-2 text-[#555]" />
        <span className="ml-auto mr-[5px] h-[18px] w-[21px] bg-[#cdcdcd]" />
        <Chevron className="-rotate-90 stroke-2 text-[#555]" />
      </div>
    </div>
  );
}

function CommandLine() {
  return (
    <section className="flex h-[57px] shrink-0 overflow-hidden bg-[#c8c8c8]">
      <div className="flex w-[27px] flex-col items-center border-r border-[#777] bg-linear-to-b from-[#7e7e7e] to-[#4c4c4c] pt-[5px]">
        <span className="h-[6px] w-[21px] bg-[radial-gradient(#c4c4c4_1px,transparent_1px)] bg-[length:4px_3px]" />
        <button type="button" aria-label="关闭" className="mt-2.5 -translate-x-px">
          <svg viewBox="0 0 10 10" className="size-2.5"><path d="M0 0l10 10M10 0L0 10" stroke="#fff" strokeWidth="2" /></svg>
        </button>
        <button type="button" aria-label="自定义" className="mt-3 -translate-x-px">
          <svg viewBox="0 0 16 16" className="size-4"><path d="M0 5l4 1 2-2-1-3 4 1 2 3-1 2 6 6-2 3-7-7-3 0z" fill="#eee" /></svg>
        </button>
      </div>
      <div className="pl-[3px] pt-3.5 font-['Liberation_Mono','Noto_Sans_CJK_SC',monospace] text-lg leading-[22px] text-black">
        <p>OPTIONS</p>
        <p><span className="text-xl leading-none">命令</span>: OP</p>
      </div>
    </section>
  );
}

function Watermark() {
  return (
    <div className="pointer-events-none absolute bottom-[13px] right-[25px] flex items-center gap-2 text-white/55">
      <svg aria-hidden="true" viewBox="289 72 215 247" className="h-[82px] w-[72px]">
        <path d="M396 72L440 96Q455 120 455 160L396 127Q350 105 296 125z" fill="#b9dcea" fillOpacity=".55" />
        <path d="M289 130Q350 105 385 122L340 160Q300 185 289 222z" fill="#a9def8" fillOpacity=".85" />
        <path d="M289 222Q300 185 340 160V230Q338 270 355 293L289 256z" fill="#6fbce6" fillOpacity=".75" />
        <path d="M340 230L396 260Q430 278 460 279L396 318L355 293Q338 270 340 230z" fill="#35a9e0" fillOpacity=".7" />
        <path d="M396 260L455 225Q490 205 503 170V255L462 278Q430 278 396 260z" fill="#3aa0d4" fillOpacity=".7" />
        <path d="M440 96L503 130V170Q490 205 455 225V160Q455 120 440 96z" fill="#6fcdf5" fillOpacity=".8" />
        <path d="M396 127L455 160V225L396 260L340 225V160z" fill="#c8c8c8" stroke="#eee" strokeWidth="5" />
        <path d="M396 140l47 27-47 27-46-27z" fill="#94c6e0" />
        <path d="M350 172v48l46 28v-52z" fill="#8cc0de" />
        <path d="M443 172v48l-47 28v-52z" fill="#63a9d0" />
        <path d="M289 222Q300 185 340 160M355 293Q338 270 340 230M462 278Q430 278 396 260M503 170Q490 205 455 225M440 96Q455 120 455 160M296 125Q350 105 396 127" fill="none" stroke="#dfe9ee" strokeWidth="3" />
      </svg>
      <div className="font-bold">
        <p className="font-['Open_Sans','Noto_Sans_CJK_SC',sans-serif] text-[41px] leading-[44px]">3D世界网</p>
        <p className="font-['DejaVu_Sans',sans-serif] text-base leading-4">WWW.3DSJW.COM</p>
      </div>
    </div>
  );
}

/* draw order tools docked on the right edge, mostly off-screen */
function SideDock() {
  return (
    <div className="flex w-[15px] shrink-0 flex-col bg-[#686868] pl-1">
      <div className="flex h-[146px] flex-col items-start overflow-hidden border border-r-0 border-[#2d2d2d] bg-[#ebebeb]">
        <span className="h-2 w-full bg-[#5c5c5c] bg-[radial-gradient(#141414_1px,transparent_1px)] bg-[length:3px_3px]" />
        <svg aria-hidden="true" viewBox="0 0 10 136" className="h-[136px] w-2.5" fill="#f7f9fc" stroke="#3d4248">
          <path d="M3.500 3.500h9v6h-9zM3.500 25.500h9v6h-9zM3.500 48.500h9v6h-9zM3.500 70.500h9v9h-9z" />
          <path d="M7 8h6v8H7zM7 32h6v6H7zM7 53h6v6H7zM7 80h6v4H7z" fill="#9aa2aa" />
          <path d="M2 90.500h8" stroke="#999" />
          <text x="3" y="105" fontSize="8" fontWeight="700" stroke="none" fill="#111" fontFamily="Liberation Sans, sans-serif">A</text>
          <path d="M6.500 106v4h4M3.500 119.500h9v7h-9z" fill="#9aa2aa" />
        </svg>
      </div>
    </div>
  );
}

export default function App() {
  return (
    <div className="relative flex h-screen flex-col overflow-hidden bg-[#686868] font-['Liberation_Serif','Noto_Sans_CJK_SC',sans-serif] text-[15px] leading-[18px] text-black">
      <div className="flex h-0.5 shrink-0 border-b border-[#8c8c8c] bg-[#cbcbcb] pl-[66px]">
        <span className="w-[253px] bg-white" />
      </div>

      <header className="flex h-[38px] shrink-0 items-center bg-white pr-1.5 font-['Open_Sans',sans-serif]">
        <button type="button" aria-label="应用程序菜单" className="mt-1 flex h-6 w-[39px] items-center gap-2 border border-[#888] bg-linear-to-b from-[#c4c4c4] to-[#8b8b8b]">
          <AcadLogo className="size-[18px]" />
          <svg viewBox="0 0 7 4" className="mb-1.5 h-1 w-[7px]"><path d="M0 0h7L3.500 4z" fill="#2d3947" /></svg>
        </button>
        <h1 className="flex-1 whitespace-pre pl-[60px] pr-[196px] text-center text-base">Autodesk AutoCAD 2014{"      "}Drawing1.dwg</h1>
        <div className="flex items-center gap-[46px] text-[#8c8c8c]">
          <button type="button" aria-label="最小化" className="h-px w-3 bg-current" />
          <button type="button" aria-label="最大化" className="size-3 border border-current" />
          <button type="button" aria-label="关闭"><CloseX /></button>
        </div>
      </header>

      <div className="mb-[3px] flex shrink-0 gap-px pr-1.5">
        <Toolbar first>
          <Tools items="textStyle" />
          <Combo label="文字样式" value="Standard" className="w-[120px]" pad="pl-[18px]" />
          <Tools items="| dimStyle" />
          <Combo label="标注样式" value="ISO-25" className="w-[120px]" pad="pl-[18px]" />
          <Tools items="| tableStyle" />
          <Combo label="表格样式" value="Standard" className="w-[120px]" pad="pl-1" />
          <Tools items="| leaderStyle" />
          <Combo label="多重引线样式" value="Standard" className="w-[120px]" pad="pl-[18px]" />
        </Toolbar>
        <Toolbar>
          <Tools items="dimLinear dimAligned dimArc dimOrdinate | dimRadius dimJogged dimDiameter dimAngular | quickDim dimBaseline dimContinue dimSpace dimBreak | tolerance centerMark inspect jogLine | dimEdit dimTextEdit dimUpdate |" />
          <Combo label="标注样式控制" value="ISO-25" className="w-[120px]" pad="pl-[18px]" />
          <Tools items="dimStyle" />
        </Toolbar>
        <Toolbar>
          <Combo label="工作空间" value="AutoCAD 经典" className="w-[174px]" pad="pl-2" />
          <Tools items="gear workspace" />
        </Toolbar>
        <Toolbar className="min-w-0 flex-1">
          <Tools items="layerProps" />
          <Combo label="图层" value="0" className="min-w-0 flex-1" pad="pl-[85px]">
            <svg aria-hidden="true" viewBox="0 0 78 16" className="pointer-events-none absolute left-1 top-0.5 h-4 w-[78px]">
              <path d="M4 12V9C-1 4 3 0 6 0s7 4 2 9v3z" fill="#ffe071" stroke="#a98a2a" />
              <path d="M4 13.500h4M5 15.500h2" stroke="#444" />
              <circle cx="21" cy="8" r="4" fill="#ffe071" stroke="#8a6a14" />
              <path d="M21 0v3M21 13v3M13 8h3M26 8h3M15.500 2.500l2 2M26.500 2.500l-2 2M15.500 13.500l2-2M26.500 13.500l-2-2" stroke="#77705a" />
              <path d="M33.500 1.500h7v7h-7zM36.500 4.500h7v6h-7z" fill="#ddd" stroke="#aaa" />
              <circle cx="42" cy="11" r="3.500" fill="#d5d5d5" stroke="#aaa" strokeDasharray="2 1" />
              <path d="M58 7V3c1-3 6-3 6 0v3" fill="none" stroke="#1e5f80" strokeWidth="1.500" />
              <path d="M51.500 7.500h9v7h-9z" fill="#8fd5ee" stroke="#1e5f80" />
              <path d="M56 9v3" stroke="#1e5f80" />
              <path d="M67.500 3.500h9v9h-9z" fill="#fff" stroke="#111" />
            </svg>
          </Combo>
          <Tools items="layerCurrent layerPrev layerStates" />
        </Toolbar>
      </div>

      <div className="flex shrink-0 gap-px">
        <Toolbar first>
          <Tools items="erase copy mirror offset array move rotate scale stretch trim extend breakPoint break join chamfer fillet blend explode" />
        </Toolbar>
        <Toolbar>
          <Tools items="line xline polyline polygon rectangle arc circle cloud spline ellipse ellipseArc insert makeBlock point hatch gradient region table mtext addSelected" />
        </Toolbar>
        <Toolbar>
          <Tools items="new open save | print preview publish dwf | cut copyClip paste matchProp blockEdit | undo v redo v | pan zoomRealtime zoomWindow zoomPrevious | properties designCenter toolPalettes sheetSet markup calculator | help" />
        </Toolbar>
        <Toolbar className="min-w-0 flex-1">
          <Combo label="颜色" value="ByLayer" className="w-[149px] shrink-0" pad="pl-[19px]" mono>
            <span className="absolute left-[5px] top-[5px] size-2.5 border border-black bg-white" />
          </Combo>
          <Divider />
          <Combo label="线型" value="ByLayer" className="w-[160px] shrink-0" pad="pl-[69px]" mono>
            <span className="absolute left-1 top-2.5 h-px w-[60px] bg-black" />
          </Combo>
          <Divider />
          <div className="flex flex-1 items-center overflow-hidden bg-[#cbcbcb] pl-1"><span className="h-px w-full bg-black" /></div>
        </Toolbar>
      </div>

      <div className="mt-1 flex min-h-0 flex-1">
        <div className="flex min-w-0 flex-1 flex-col border-r-2 border-t border-[#f8f8f8] border-t-[#a8a8a8]">
          <div className="flex min-h-0 flex-1 pt-px">
            <Viewport />
            <div className="flex w-[21px] flex-col items-center border-l border-white bg-[#f0f0f0] py-2">
              <Chevron className="rotate-180 stroke-2 text-[#555]" />
              <span className="mt-2 h-[21px] w-[19px] bg-[#cdcdcd]" />
              <Chevron className="mt-auto stroke-2 text-[#555]" />
            </div>
          </div>
          <LayoutBar />
        </div>
        <SideDock />
      </div>

      <div className="h-1 shrink-0 bg-[#666]" />
      <CommandLine />

      <div className="absolute left-0 top-[97px]">
        <OptionsDialog />
        <RightClickDialog />
        <svg aria-hidden="true" viewBox="0 0 104 70" className="absolute left-[636px] top-[346px] h-[70px] w-[104px]">
          <path d="M103 1L83 2l4 4L0 68l1 1 90-55 1 5z" fill="#ff2a16" />
        </svg>
        <p className="absolute left-[821px] top-[615px] whitespace-nowrap font-['Open_Sans','Noto_Sans_CJK_SC',sans-serif] text-[34px] leading-10 text-[#ff2015]">ug爱好者</p>
      </div>

      <Watermark />
    </div>
  );
}
